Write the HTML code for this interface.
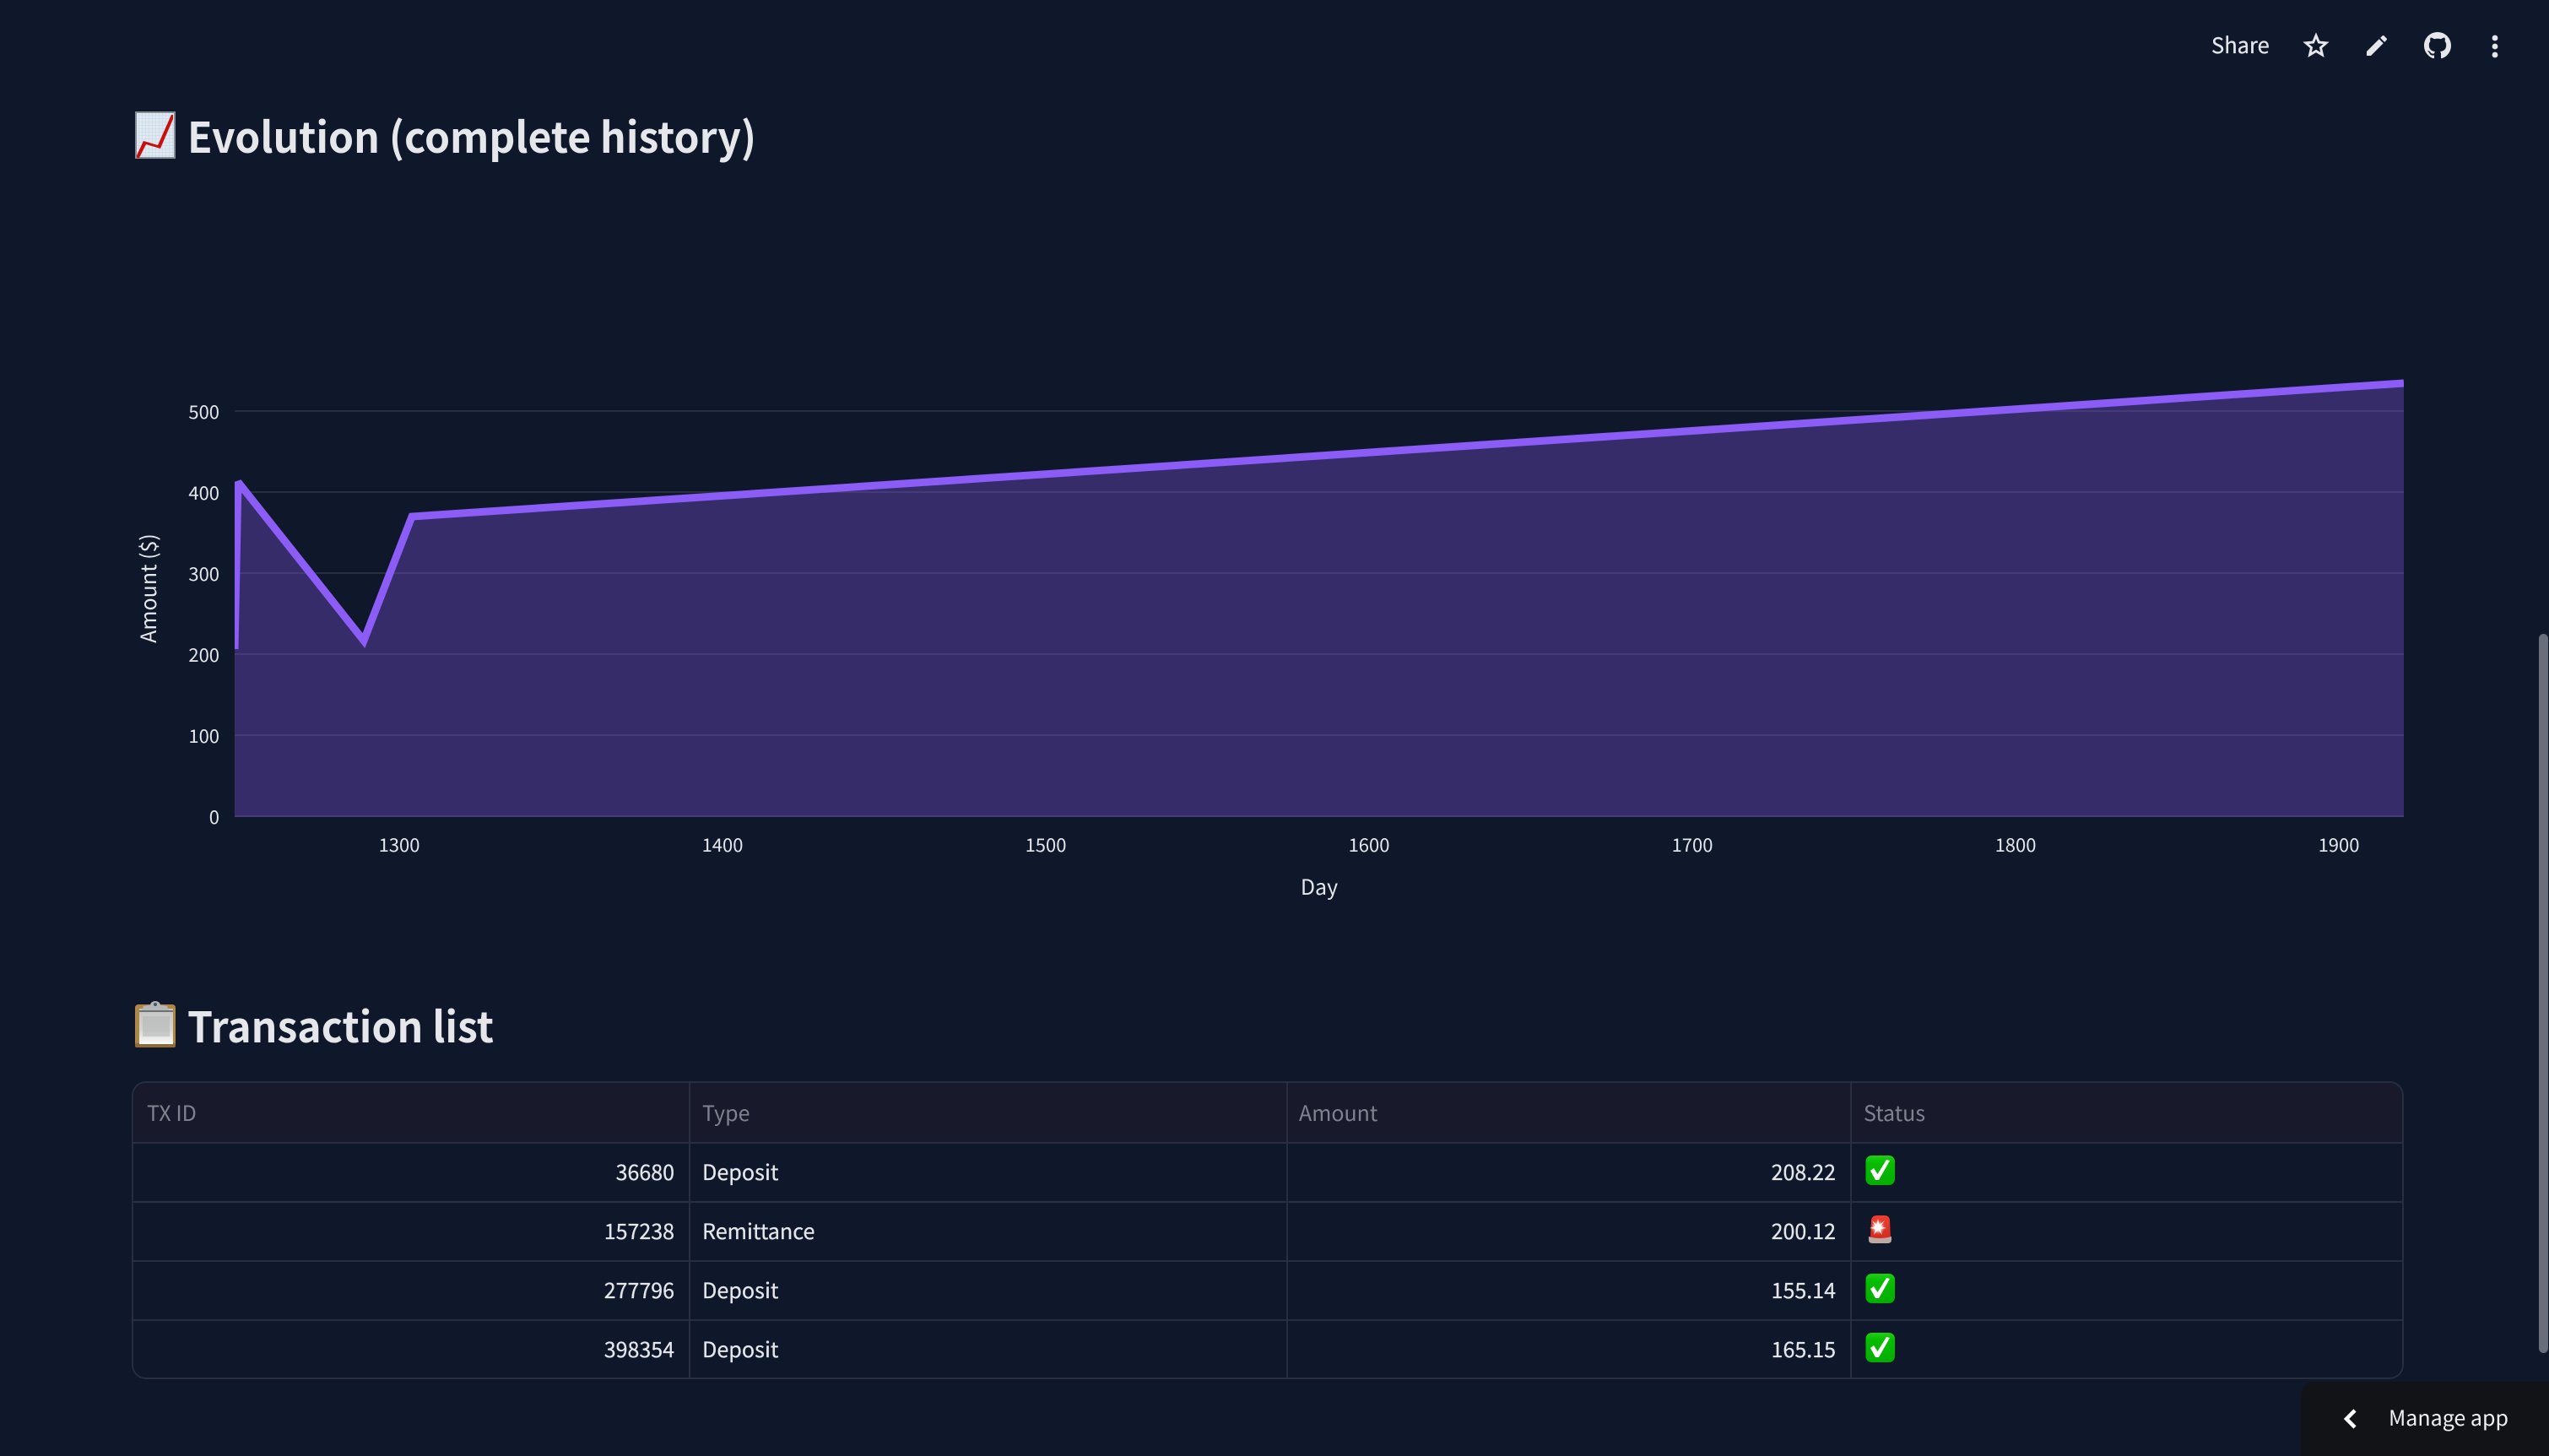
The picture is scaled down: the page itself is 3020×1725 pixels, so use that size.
<!DOCTYPE html>
<html lang="en">
<head>
<meta charset="utf-8">
<title>Evolution</title>
<style>
html,body{margin:0;padding:0;width:3020px;height:1725px;overflow:hidden;background:#0f172a}
svg{display:block;position:absolute;left:0;top:0}
text{font-family:"Noto Sans CJK JP","Liberation Sans",sans-serif;fill:#e5e7eb}
.h{font-size:50px;font-weight:700}
.ax{font-size:22px}
.at{font-size:25px}
.th{font-size:25px;fill:#7f8390}
.td{font-size:25.200px;stroke:#e5e7eb;stroke-width:.25px}
.n{font-size:25px}
.r{text-anchor:end}
.c{text-anchor:middle}
</style>
</head>
<body>
<svg width="3020" height="1725" viewBox="0 0 3020 1725" xmlns="http://www.w3.org/2000/svg">
<defs>
<clipPath id="plot"><rect x="278" y="400" width="2570" height="570"/></clipPath>
<linearGradient id="paper" x1="0" y1="0" x2="0" y2="1"><stop offset="0" stop-color="#c4c6c6"/><stop offset="0.6" stop-color="#d4d5d5"/><stop offset="1" stop-color="#fbfbfb"/></linearGradient>
<linearGradient id="green" x1="0" y1="0" x2="0" y2="1"><stop offset="0" stop-color="#1fd016"/><stop offset="0.25" stop-color="#06bd00"/><stop offset="1" stop-color="#04ad00"/></linearGradient>
<linearGradient id="red" x1="0" y1="0" x2="0" y2="1"><stop offset="0" stop-color="#ee3f30"/><stop offset="1" stop-color="#d42a20"/></linearGradient>
<radialGradient id="glow"><stop offset="0" stop-color="#fff"/><stop offset="0.45" stop-color="#fde0da"/><stop offset="1" stop-color="#f1584a" stop-opacity="0"/></radialGradient>
<pattern id="gridp" width="4" height="4" patternUnits="userSpaceOnUse"><rect width="4" height="4" fill="#dfeaf2"/><path d="M0 0H4M0 0V4" stroke="#c4d4e2" stroke-width="1"/></pattern>
<g id="check">
<rect x="0" y="0" width="34.500" height="35" rx="7" fill="url(#green)"/>
<path d="M5.500 18 L9.500 15 L14 22 L24.500 5 L28.500 6 L15.500 29 L11.500 29 Z" fill="#fff"/>
</g>
</defs>

<rect width="3020" height="1725" fill="#0f172a"/>

<!-- top toolbar -->
<text x="2620" y="63" style="font-size:25.500px;stroke:#e5e7eb;stroke-width:.25px">Share</text>
<path transform="translate(2726 36) scale(1.5)" fill="#e5e7eb" stroke="#e5e7eb" stroke-width="0.350" d="M22 9.24l-7.19-.62L12 2 9.19 8.63 2 9.24l5.46 4.73L5.82 21 12 17.27 18.18 21l-1.63-7.03L22 9.24zM12 15.4l-3.76 2.27 1-4.28-3.32-2.88 4.38-.38L12 6.1l1.71 4.04 4.38.38-3.32 2.88 1 4.28L12 15.4z"/>
<path transform="translate(2800 38) scale(1.333)" fill="#e5e7eb" d="M3 17.25V21h3.75L17.81 9.94l-3.75-3.75L3 17.25zM20.71 7.04c.39-.39.39-1.02 0-1.41l-2.34-2.34c-.39-.39-1.02-.39-1.41 0l-1.83 1.83 3.75 3.75 1.83-1.83z"/>
<path transform="translate(2872 38) scale(2)" fill="#e5e7eb" d="M8 0C3.58 0 0 3.58 0 8c0 3.54 2.29 6.53 5.47 7.59.4.07.55-.17.55-.38 0-.19-.01-.82-.01-1.49-2.01.37-2.53-.49-2.69-.94-.09-.23-.48-.94-.82-1.13-.28-.15-.68-.52-.01-.53.63-.01 1.08.58 1.23.82.72 1.21 1.87.87 2.33.66.07-.52.28-.87.51-1.07-1.78-.2-3.64-.89-3.64-3.95 0-.87.31-1.59.82-2.15-.08-.2-.36-1.02.08-2.12 0 0 .67-.21 2.2.82.64-.18 1.32-.27 2-.27.68 0 1.36.09 2 .27 1.53-1.04 2.2-.82 2.2-.82.44 1.1.16 1.92.08 2.12.51.56.82 1.27.82 2.15 0 3.07-1.87 3.75-3.65 3.95.29.25.54.73.54 1.48 0 1.07-.01 1.93-.01 2.2 0 .21.15.46.55.38A8.013 8.013 0 0016 8c0-4.42-3.58-8-8-8z"/>
<circle cx="2956" cy="45" r="3.400" fill="#e5e7eb"/><circle cx="2956" cy="55" r="3.400" fill="#e5e7eb"/><circle cx="2956" cy="65" r="3.400" fill="#e5e7eb"/>

<!-- heading 1 -->
<g>
<rect x="161" y="133" width="46" height="54" fill="url(#gridp)" stroke="#868c93" stroke-width="2"/>
<path d="M162 184 L170 167 L187 172 L203 136 L205 136 L205 141 L190 176 L173 171 L165 187 L162 187 Z" fill="#c90f0c"/>
</g>
<text class="h" x="222" y="181" textLength="674" lengthAdjust="spacingAndGlyphs">Evolution (complete history)</text>

<!-- chart grid -->
<g stroke="#272e3f" stroke-width="2">
<line x1="278" x2="2848" y1="487" y2="487"/>
<line x1="278" x2="2848" y1="583" y2="583"/>
<line x1="278" x2="2848" y1="679" y2="679"/>
<line x1="278" x2="2848" y1="775" y2="775"/>
<line x1="278" x2="2848" y1="871" y2="871"/>
<line x1="278" x2="2848" y1="967" y2="967"/>
</g>
<polygon points="278,769 282,571 431,759 488,612 2848,454 2848,968 278,968" fill="#8b5cf6" fill-opacity="0.31"/>
<g clip-path="url(#plot)">
<polyline points="278,769 282,571 431,759 488,612 2848,454" fill="none" stroke="#8b5cf6" stroke-width="9" stroke-linejoin="miter" stroke-miterlimit="2.500"/>
</g>

<!-- y axis -->
<text class="ax r" x="260" y="496">500</text>
<text class="ax r" x="260" y="592">400</text>
<text class="ax r" x="260" y="688">300</text>
<text class="ax r" x="260" y="784">200</text>
<text class="ax r" x="260" y="880">100</text>
<text class="ax r" x="260" y="976">0</text>
<text class="at c" transform="translate(185 697) rotate(-90)">Amount ($)</text>

<!-- x axis -->
<text class="ax c" x="473" y="1009">1300</text>
<text class="ax c" x="856" y="1009">1400</text>
<text class="ax c" x="1239" y="1009">1500</text>
<text class="ax c" x="1622" y="1009">1600</text>
<text class="ax c" x="2005" y="1009">1700</text>
<text class="ax c" x="2388" y="1009">1800</text>
<text class="ax c" x="2771" y="1009">1900</text>
<text class="at c" x="1563" y="1060">Day</text>

<!-- heading 2 -->
<g>
<rect x="160" y="1190" width="48" height="51" rx="4" fill="#b08646"/>
<rect x="160" y="1236" width="48" height="5" rx="2" fill="#8f6a35"/>
<rect x="165" y="1195" width="40" height="42" fill="url(#paper)"/>
<rect x="169" y="1204" width="32" height="24" fill="#b4b5b5" opacity="0.55"/>
<path d="M168 1197 L170 1192 L178 1191 A6 5 0 0 1 190 1191 L198 1192 L200 1197 Z" fill="#b3b6ba"/>
<rect x="165" y="1197" width="40" height="2" fill="#6f6f6f"/>
<circle cx="184" cy="1190" r="2" fill="#4d5560"/>
</g>
<text class="h" x="222" y="1235" textLength="363" lengthAdjust="spacingAndGlyphs">Transaction list</text>

<!-- table -->
<path d="M159 1354 V1298 a15 15 0 0 1 15 -15 H2831 a15 15 0 0 1 15 15 V1354 Z" fill="#181a2b"/>
<g stroke="#282d3f" stroke-width="2" fill="none">
<rect x="157" y="1282" width="2690" height="351" rx="16"/>
<line x1="157" x2="2847" y1="1354" y2="1354"/>
<line x1="157" x2="2847" y1="1424" y2="1424"/>
<line x1="157" x2="2847" y1="1494" y2="1494"/>
<line x1="157" x2="2847" y1="1564" y2="1564"/>
<line x1="817" x2="817" y1="1282" y2="1633"/>
<line x1="1525" x2="1525" y1="1282" y2="1633"/>
<line x1="2193" x2="2193" y1="1282" y2="1633"/>
</g>

<text class="th" x="174" y="1328">TX ID</text>
<text class="th" x="832" y="1328">Type</text>
<text class="th" x="1539" y="1328">Amount</text>
<text class="th" x="2208" y="1328">Status</text>

<text class="td n r" x="799" y="1398">36680</text>
<text class="td" x="832" y="1398">Deposit</text>
<text class="td n r" x="2175" y="1398">208.22</text>
<use href="#check" x="2210.500" y="1369"/>

<text class="td n r" x="799" y="1468">157238</text>
<text class="td" x="832" y="1468">Remittance</text>
<text class="td n r" x="2175" y="1468">200.12</text>
<g>
<path d="M2216 1467 L2217 1447 Q2217 1440 2224 1440 L2233 1440 Q2239 1440 2239 1447 L2240 1467 Z" fill="url(#red)"/>
<path d="M2214 1465 Q2227 1469 2241 1465 L2241 1469 Q2241 1473 2236 1473 L2219 1473 Q2214 1473 2214 1469 Z" fill="#bcaaa3"/>
<circle cx="2225" cy="1454" r="9" fill="url(#glow)"/>
<path d="M2225 1444 L2226.500 1451 L2233 1446 L2228 1453 L2235 1455 L2228 1456 L2230 1463 L2225 1457 L2220 1463 L2222 1456 L2215 1455 L2222 1453 L2218 1446 L2223.500 1451 Z" fill="#fff" opacity="0.9"/>
</g>

<text class="td n r" x="799" y="1538">277796</text>
<text class="td" x="832" y="1538">Deposit</text>
<text class="td n r" x="2175" y="1538">155.14</text>
<use href="#check" x="2210.500" y="1509"/>

<text class="td n r" x="799" y="1608">398354</text>
<text class="td" x="832" y="1608">Deposit</text>
<text class="td n r" x="2175" y="1608">165.15</text>
<use href="#check" x="2210.500" y="1579"/>

<!-- scrollbar -->
<rect x="3008" y="751" width="11" height="852" rx="5.500" fill="#696e7a"/>

<!-- manage app -->
<path d="M2726 1725 V1653 a16 16 0 0 1 16 -16 H3020 V1725 Z" fill="#111317"/>
<polyline points="2790,1671 2780,1681 2790,1691" fill="none" stroke="#fff" stroke-width="4.500"/>
<text x="2830" y="1689" style="font-size:25px;fill:#f0f1f3">Manage app</text>
</svg>
</body>
</html>
